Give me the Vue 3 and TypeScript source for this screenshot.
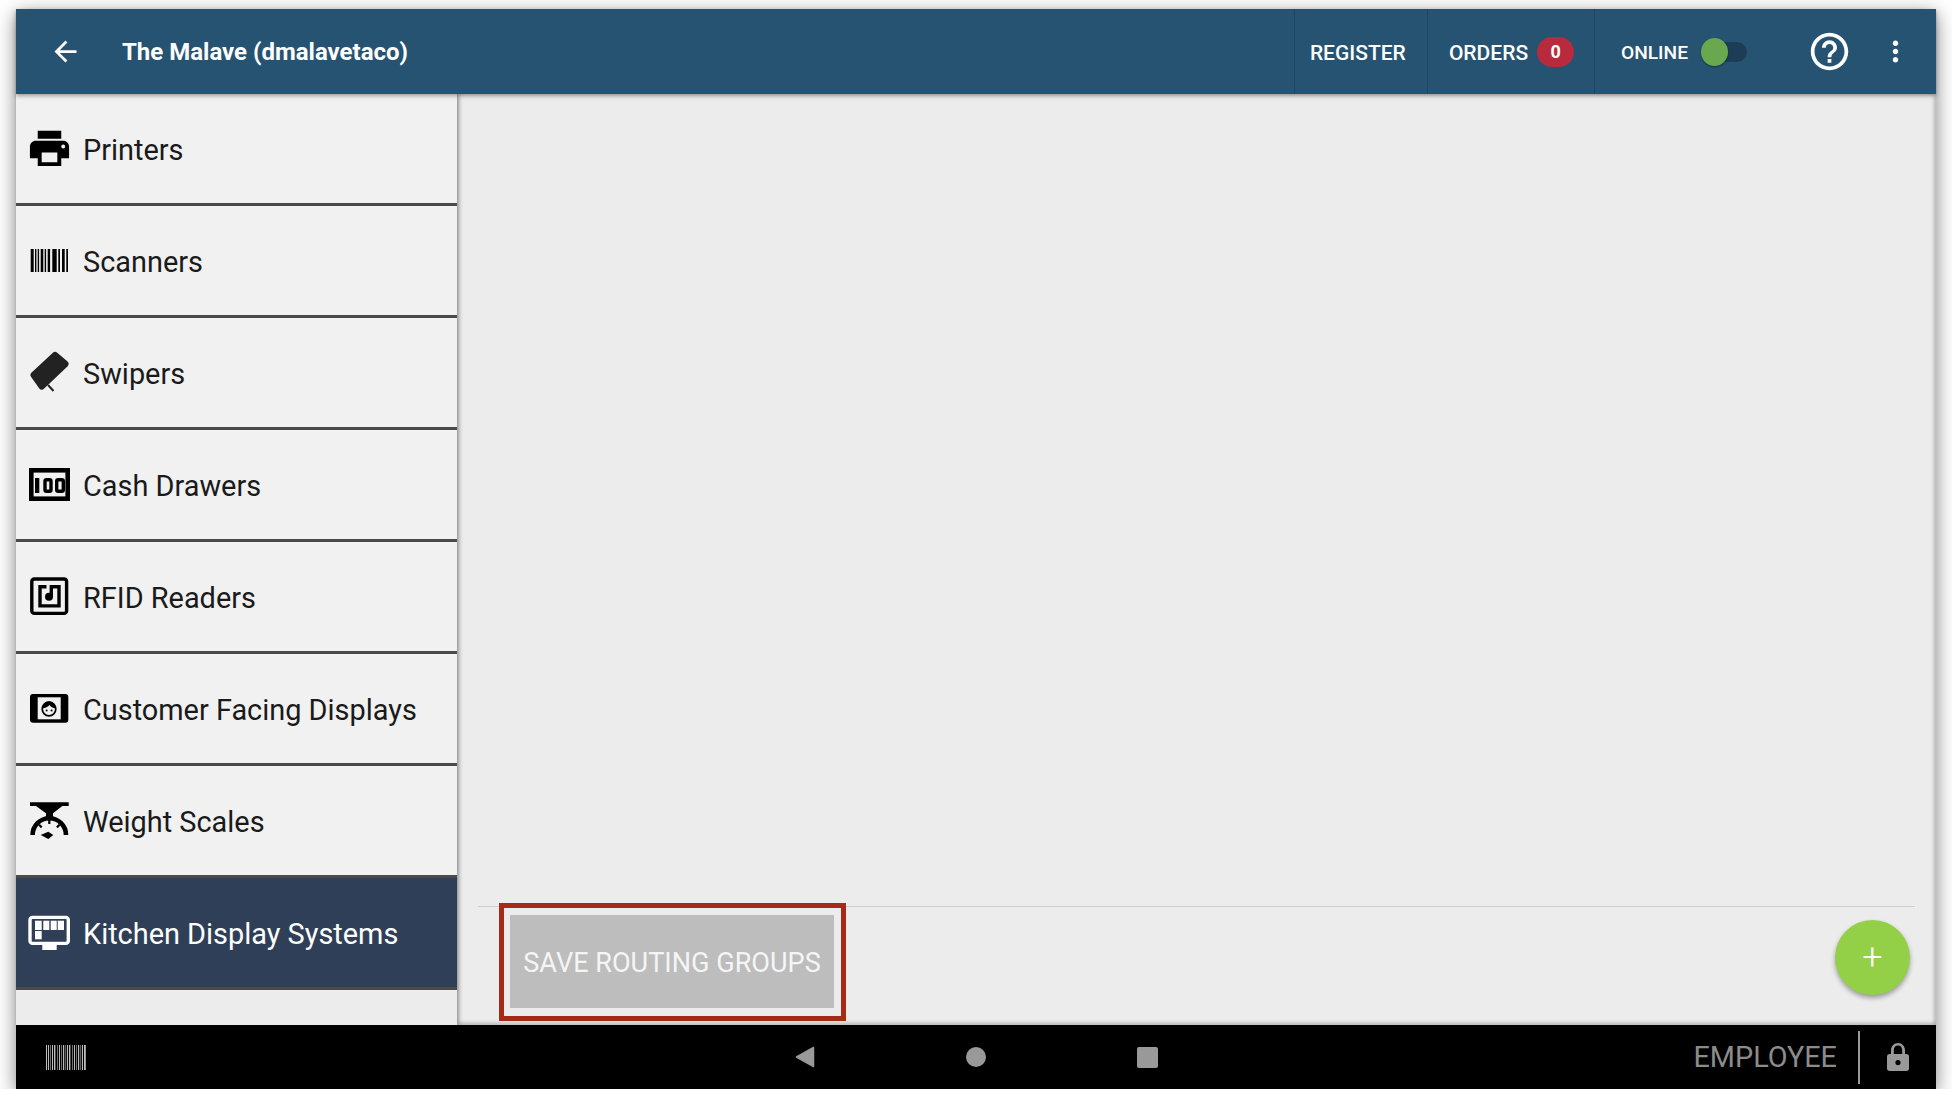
<template>
  <div class="frame">
    <header class="topbar">
      <svg class="back" viewBox="0 0 24 24"><path d="M20 11H7.83l5.59-5.59L12 4l-8 8 8 8 1.41-1.41L7.83 13H20v-2z" /></svg>
      <div class="title">The Malave (dmalavetaco)</div>
      <div class="actions">
        <div class="action register"><span>REGISTER</span></div>
        <div class="action orders"><span>ORDERS</span> <span class="badge">0</span></div>
        <div class="action online">
          <span>ONLINE</span>
          <span class="toggle"><span class="thumb"></span></span>
        </div>
        <svg class="help" viewBox="0 0 24 24"><path d="M11 18h2v-2h-2v2zm1-16C6.48 2 2 6.48 2 12s4.48 10 10 10 10-4.48 10-10S17.52 2 12 2zm0 18c-4.41 0-8-3.59-8-8s3.59-8 8-8 8 3.59 8 8-3.59 8-8 8zm0-14c-2.21 0-4 1.79-4 4h2c0-1.1.9-2 2-2s2 .9 2 2c0 2-3 1.75-3 5h2c0-2.25 3-2.5 3-5 0-2.21-1.79-4-4-4z" /></svg>
        <svg class="more" viewBox="0 0 24 24"><path d="M12 8c1.1 0 2-.9 2-2s-.9-2-2-2-2 .9-2 2 .9 2 2 2zm0 2c-1.1 0-2 .9-2 2s.9 2 2 2 2-.9 2-2-.9-2-2-2zm0 6c-1.1 0-2 .9-2 2s.9 2 2 2 2-.9 2-2-.9-2-2-2z" /></svg>
      </div>
    </header>

    <div class="main">
      <aside class="sidebar">
        <div v-for="row in rows" :key="row.label" class="row" :class="{ active: row.active }">
          <svg class="icon" viewBox="0 0 47 47">
            <g v-if="row.icon === 'printer'" transform="scale(1.958)">
              <path d="M19 8H5c-1.66 0-3 1.34-3 3v6h4v4h12v-4h4v-6c0-1.66-1.34-3-3-3zm-3 11H8v-5h8v5zm3-7c-.55 0-1-.45-1-1s.45-1 1-1 1 .45 1 1-.45 1-1 1zm-1-9H6v4h12V3z" />
            </g>
            <g v-else-if="row.icon === 'barcode'">
              <rect v-for="b in scanBars" :key="b[0]" :x="b[0]" y="12" :width="b[1]" height="23" />
            </g>
            <g v-else-if="row.icon === 'swiper'">
              <polygon points="29,6.5 39,15 15.8,37 8,26" fill="#222" stroke="#222" stroke-width="7" stroke-linejoin="round" />
              <path d="M22 36l5.5 6" fill="none" stroke="#222" stroke-width="2" />
            </g>
            <g v-else-if="row.icon === 'cash'">
              <rect x="5.3" y="9.3" width="36.4" height="28.4" fill="none" stroke="#000" stroke-width="4.6" />
              <rect x="9" y="17" width="4.3" height="15" />
              <rect x="19" y="18.7" width="6" height="11.6" rx="1.5" fill="none" stroke="#000" stroke-width="3.4" />
              <rect x="30.7" y="18.7" width="6.6" height="11.6" rx="1.5" fill="none" stroke="#000" stroke-width="3.4" />
            </g>
            <g v-else-if="row.icon === 'rfid'">
              <rect x="5.8" y="6" width="34.8" height="34.4" rx="2.5" fill="none" stroke="#000" stroke-width="3.4" />
              <path d="M20.5 13.7H14V32.9H33V13.7H25.3V24" fill="none" stroke="#000" stroke-width="3.4" />
              <circle cx="23" cy="23.7" r="4" />
            </g>
            <g v-else-if="row.icon === 'display'">
              <rect x="4" y="9" width="38.3" height="28.7" rx="3" />
              <rect x="11.7" y="12.3" width="23" height="22" fill="#f1f1f1" />
              <circle cx="23" cy="24" r="6.8" fill="none" stroke="#000" stroke-width="1.7" />
              <path d="M16.5 23.5C16.5 19 19.5 16.5 23 16.5S29.5 19 29.5 23.5C27 23 24.5 22 23.5 20C22 22 19.5 23 16.5 23.5Z" />
              <circle cx="20.6" cy="25.5" r="1" />
              <circle cx="25.6" cy="25.5" r="1" />
            </g>
            <g v-else-if="row.icon === 'scale'">
              <path d="M4 5.3H42.7V9H36.3L27 16.3V20H20V16.3L10 9H4Z" />
              <path d="M6.6 38A16.7 16.7 0 0 1 40 38" fill="none" stroke="#000" stroke-width="4.6" />
              <path d="M23.3 21v6M13.1 27.8l2.6 2.6M33.5 27.8l-2.6 2.6" fill="none" stroke="#000" stroke-width="2.2" />
              <polygon points="14.7,38 22.3,34.7 27.3,38 22.3,42" />
            </g>
            <g v-else-if="row.icon === 'kitchen'" fill="#fff">
              <rect x="4" y="8.4" width="38.3" height="26" rx="2.5" fill="none" stroke="#fff" stroke-width="3.4" />
              <rect x="16.3" y="36" width="14.4" height="5" />
              <rect x="9" y="11.7" width="6.7" height="9.3" />
              <rect x="17.3" y="11.7" width="6" height="9.3" />
              <rect x="24.7" y="11.7" width="6" height="9.3" />
              <rect x="31.7" y="11.7" width="6.3" height="9.3" />
              <rect x="9" y="22" width="6.7" height="8.3" />
            </g>
          </svg>
          <span class="label">{{ row.label }}</span>
        </div>
      </aside>

      <section class="content">
        <div class="blank"></div>
        <div class="footer">
          <button class="save" disabled>SAVE ROUTING GROUPS</button>
          <div class="fab">+</div>
          <div class="callout"></div>
        </div>
      </section>
    </div>

    <footer class="navbar">
      <div class="nav-left">
        <svg class="scan" viewBox="0 0 40 25">
          <rect v-for="b in navBars" :key="b[0]" :x="b[0]" y="0" :width="b[1]" height="25" />
        </svg>
      </div>
      <div class="nav-center">
        <svg class="nav-btn" viewBox="0 0 20 22"><path d="M1.5 11L18.5 1.5V20.5Z" stroke="#999" stroke-width="1.5" stroke-linejoin="round" /></svg>
        <span class="nav-dot"></span>
        <span class="nav-square"></span>
      </div>
      <div class="nav-right">
        <span class="role">EMPLOYEE</span>
        <span class="nav-divider"></span>
        <svg class="lock" viewBox="0 0 22 28">
          <path fill-rule="evenodd" d="M11 0C6.8 0 4 3.2 4 7.5V11H2.5C1.1 11 0 12.1 0 13.5V25.5C0 26.9 1.1 28 2.5 28H19.5C20.9 28 22 26.9 22 25.5V13.5C22 12.1 20.9 11 19.5 11H18V7.5C18 3.2 15.2 0 11 0ZM11 2.6C13.7 2.6 15.2 4.6 15.2 7.5V11H6.8V7.5C6.8 4.6 8.3 2.6 11 2.6ZM11 17A2.6 2.6 0 1 1 11 22.2A2.6 2.6 0 1 1 11 17Z" />
        </svg>
      </div>
    </footer>
  </div>
</template>

<script setup lang="ts">
interface Row {
  label: string
  icon: string
  active?: boolean
}

const rows: Row[] = [
  { label: 'Printers', icon: 'printer' },
  { label: 'Scanners', icon: 'barcode' },
  { label: 'Swipers', icon: 'swiper' },
  { label: 'Cash Drawers', icon: 'cash' },
  { label: 'RFID Readers', icon: 'rfid' },
  { label: 'Customer Facing Displays', icon: 'display' },
  { label: 'Weight Scales', icon: 'scale' },
  { label: 'Kitchen Display Systems', icon: 'kitchen', active: true },
]

// x, width of each bar
const scanBars: number[][] = [
  [4.7, 3], [9, 1.4], [11.7, 1.4], [14.7, 2.6], [18.7, 1.4], [21.7, 2.4], [26.3, 4.4], [32.3, 1.7],
  [36, 2.7], [40.3, 1.7],
]

const navBars: number[][] = [
  [0, 1], [2, 1], [4, 0.6], [6, 1], [8, 1.4], [11, 0.6], [13, 1], [15, 0.6], [17, 1.2], [19.5, 0.6],
  [21, 1], [23, 1.4], [26, 0.6], [28, 1], [30, 0.6], [32, 1.2], [34.5, 0.6], [36, 1], [38, 1.8],
]
</script>

<style>
html,
body {
  background: #fff;
}
</style>

<style scoped>
.frame {
  width: 1920px;
  height: 1080px;
  margin: 9px 16px 0;
  display: flex;
  flex-direction: column;
  font-family: Roboto, "Liberation Sans", sans-serif;
  box-shadow: 0 5px 18px rgba(0, 0, 0, 0.5);
}

.topbar {
  height: 85px;
  flex: none;
  display: flex;
  align-items: center;
  background: #275372;
  color: #fff;
  position: relative;
  z-index: 2;
  box-shadow: 0 2px 4px rgba(0, 0, 0, 0.35);
}

.back {
  width: 33px;
  height: 33px;
  margin-left: 33px;
  fill: #fff;
}

.title {
  margin-left: 40px;
  font-size: 24px;
  font-weight: 700;
}

.actions {
  margin-left: auto;
  height: 100%;
  display: flex;
  align-items: center;
}

.action {
  height: 100%;
  display: flex;
  align-items: center;
  font-size: 21px;
  font-weight: 500;
  border-left: 1px solid #1f4560;
}

.action > span:first-child {
  padding-top: 2px;
}

.register {
  width: 133px;
  padding-left: 15px;
  box-sizing: border-box;
}

.orders {
  width: 167px;
  padding-left: 21px;
  box-sizing: border-box;
  gap: 9px;
}

.badge {
  flex: none;
  width: 37px;
  height: 30px;
  border-radius: 15px;
  background: #b92b3c;
  font-size: 18px;
  font-weight: 700;
  display: flex;
  align-items: center;
  justify-content: center;
}

.online {
  padding-left: 26px;
  gap: 13px;
  font-size: 19.2px;
}

.toggle {
  width: 46px;
  height: 20px;
  border-radius: 10px;
  background: #1c3d55;
  position: relative;
}

.thumb {
  position: absolute;
  left: 0;
  top: -4px;
  width: 27px;
  height: 28px;
  border-radius: 50%;
  background: #69a84f;
  box-shadow: 0 1px 2px rgba(0, 0, 0, 0.4);
}

.help {
  width: 45px;
  height: 45px;
  margin-left: 60px;
  fill: #fff;
}

.more {
  width: 33px;
  height: 33px;
  margin-left: 27px;
  margin-right: 24px;
  fill: #fff;
}

.main {
  flex: 1;
  display: flex;
  min-height: 0;
}

.sidebar {
  width: 441px;
  flex: none;
  background: #ececec;
  position: relative;
  z-index: 1;
  box-shadow: 2px 0 4px rgba(0, 0, 0, 0.35);
}

.row {
  height: 112px;
  box-sizing: border-box;
  display: flex;
  align-items: center;
  gap: 10px;
  padding-left: 10px;
  background: #f1f1f1;
  border-bottom: 3px solid #4a4a4a;
  color: #1a1a1a;
}

.row.active {
  background: #2f3f57;
  color: #fff;
}

.icon {
  width: 47px;
  height: 47px;
  flex: none;
}

.label {
  font-size: 28.9px;
  padding-top: 3px;
}

.content {
  flex: 1;
  display: flex;
  flex-direction: column;
  background: #ececec;
  box-shadow: inset 0 -3px 3px rgba(0, 0, 0, 0.14), inset -3px 0 3px rgba(0, 0, 0, 0.14);
}

.blank {
  flex: 1;
}

.footer {
  height: 119px;
  box-sizing: border-box;
  margin: 0 21px;
  border-top: 1px solid #cfcfcf;
  display: flex;
  justify-content: space-between;
  align-items: flex-start;
  padding: 8px 5px 0 32px;
  position: relative;
}

.save {
  width: 324px;
  height: 93px;
  border: none;
  background: #bdbdbd;
  color: #f5f5f5;
  font-family: inherit;
  font-size: 27.1px;
  padding: 2px 0 0;
}

.fab {
  width: 75px;
  height: 75px;
  margin-top: 5px;
  border-radius: 50%;
  background: #93d047;
  color: #fff;
  font-size: 36px;
  font-weight: 300;
  line-height: 74px;
  text-align: center;
  box-shadow: 0 3px 5px rgba(0, 0, 0, 0.35);
}

.callout {
  position: absolute;
  left: 21px;
  top: -4px;
  width: 347px;
  height: 118px;
  box-sizing: border-box;
  border: 5px solid #a52a17;
}

.navbar {
  height: 64px;
  flex: none;
  background: #000;
  display: grid;
  grid-template-columns: 1fr auto 1fr;
  align-items: center;
}

.nav-left {
  padding-left: 30px;
  display: flex;
}

.scan {
  width: 40px;
  height: 25px;
  fill: #bbb;
}

.nav-center {
  display: flex;
  align-items: center;
  gap: 151px;
  color: #999;
}

.nav-btn {
  width: 20px;
  height: 22px;
  fill: #999;
}

.nav-dot {
  width: 20px;
  height: 20px;
  border-radius: 50%;
  background: #999;
}

.nav-square {
  width: 21px;
  height: 21px;
  border-radius: 2px;
  background: #999;
}

.nav-right {
  display: flex;
  align-items: center;
  justify-content: flex-end;
  height: 100%;
  padding-right: 27px;
}

.role {
  color: #8c8c8c;
  font-size: 28.8px;
}

.nav-divider {
  width: 2px;
  height: 53px;
  margin: 0 27px 0 21px;
  background: #999;
}

.lock {
  width: 22px;
  height: 28px;
  fill: #999;
}
</style>
